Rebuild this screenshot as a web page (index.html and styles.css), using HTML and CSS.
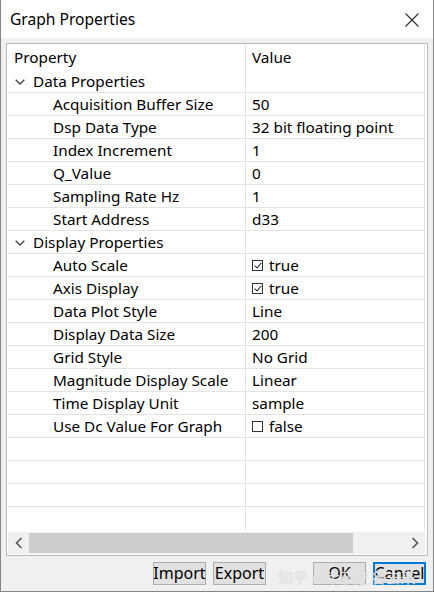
FILE: index.html
```html
<!DOCTYPE html>
<html lang="en">
<head>
    <meta charset="UTF-8">
    <meta name="viewport" content="width=device-width, initial-scale=1.0">
    <title>Graph Properties</title>
    <link rel="stylesheet" href="styles.css">
</head>
<body>
<div class="window">
    <div class="titlebar">
        <span class="title">Graph Properties</span>
        <svg class="close" width="14" height="14" viewBox="0 0 14 14">
            <path d="M0.5 0.5 L13.5 13.5 M13.5 0.5 L0.5 13.5" stroke="#333" stroke-width="1.2" fill="none"/>
        </svg>
    </div>

    <div class="body">
        <div class="grid">
            <div class="rows">
                <div class="row head"><div class="name">Property</div><div class="value">Value</div></div>

                <div class="row cat">
                    <div class="name"><svg class="chev" width="10" height="6" viewBox="0 0 10 6"><path d="M0.7 0.7 L5 5 L9.3 0.7" stroke="#444" stroke-width="1.4" fill="none"/></svg>Data Properties</div>
                    <div class="value"></div>
                </div>
                <div class="row"><div class="name item">Acquisition Buffer Size</div><div class="value">50</div></div>
                <div class="row"><div class="name item">Dsp Data Type</div><div class="value">32 bit floating point</div></div>
                <div class="row"><div class="name item">Index Increment</div><div class="value">1</div></div>
                <div class="row"><div class="name item">Q_Value</div><div class="value">0</div></div>
                <div class="row"><div class="name item">Sampling Rate Hz</div><div class="value">1</div></div>
                <div class="row"><div class="name item">Start Address</div><div class="value">d33</div></div>

                <div class="row cat">
                    <div class="name"><svg class="chev" width="10" height="6" viewBox="0 0 10 6"><path d="M0.7 0.7 L5 5 L9.3 0.7" stroke="#444" stroke-width="1.4" fill="none"/></svg>Display Properties</div>
                    <div class="value"></div>
                </div>
                <div class="row"><div class="name item">Auto Scale</div><div class="value"><span class="check on"></span>true</div></div>
                <div class="row"><div class="name item">Axis Display</div><div class="value"><span class="check on"></span>true</div></div>
                <div class="row"><div class="name item">Data Plot Style</div><div class="value">Line</div></div>
                <div class="row"><div class="name item">Display Data Size</div><div class="value">200</div></div>
                <div class="row"><div class="name item">Grid Style</div><div class="value">No Grid</div></div>
                <div class="row"><div class="name item">Magnitude Display Scale</div><div class="value">Linear</div></div>
                <div class="row"><div class="name item">Time Display Unit</div><div class="value">sample</div></div>
                <div class="row"><div class="name item">Use Dc Value For Graph</div><div class="value"><span class="check"></span>false</div></div>

                <div class="row empty"><div class="name"></div><div class="value"></div></div>
                <div class="row empty"><div class="name"></div><div class="value"></div></div>
                <div class="row empty"><div class="name"></div><div class="value"></div></div>
                <div class="row empty"><div class="name"></div><div class="value"></div></div>
            </div>

            <div class="hscroll">
                <svg class="arrow" width="8" height="12" viewBox="0 0 8 12"><path d="M6.5 1 L1.5 6 L6.5 11" stroke="#555" stroke-width="1.6" fill="none"/></svg>
                <div class="track"><div class="thumb"></div></div>
                <svg class="arrow" width="8" height="12" viewBox="0 0 8 12"><path d="M1.5 1 L6.5 6 L1.5 11" stroke="#555" stroke-width="1.6" fill="none"/></svg>
            </div>
        </div>

        <div class="buttons">
            <span class="watermark">知乎 @半夜之名去来了</span>
            <button class="btn">Import</button>
            <button class="btn gap">Export</button>
            <button class="btn">OK</button>
            <button class="btn default">Cancel</button>
        </div>
    </div>
</div>
</body>
</html>
```

FILE: styles.css
```css
* { box-sizing: border-box; }

body {
    margin: 0;
    font-family: "Noto Sans", "Noto Sans CJK SC", sans-serif;
    font-size: 15.3px;
    color: #000;
}

.window {
    width: 434px;
    height: 592px;
    border: 1px solid #858585;
    border-top: none;
    background: #f0f0f0;
    display: flex;
    flex-direction: column;
}

.titlebar {
    height: 38px;
    background: #fff;
    display: flex;
    align-items: center;
    justify-content: space-between;
    padding: 0 14px 0 9px;
}
.title { font-size: 15.6px; }
.close { margin-top: 1px; }

.body {
    flex: 1;
    padding: 5px 5px 0 5px;
    display: flex;
    flex-direction: column;
}

.grid {
    height: 513px;
    border: 1px solid #b9b9b9;
    background: #fff;
    padding: 0 2px 1px 1px;
    display: flex;
    flex-direction: column;
}

.rows {
    flex: 1;
    border-right: 1px solid #e3e3e3;
    overflow: hidden;
}

.row {
    display: flex;
    height: 23px;
    border-bottom: 1px solid #e3e3e3;
    line-height: 22px;
    white-space: nowrap;
}
.row.head { height: 26px; border-bottom: none; line-height: 28px; }
.row.empty:last-child { border-bottom: none; }

.name {
    width: 238px;
    padding-left: 6px;
    border-right: 1px solid #e3e3e3;
    display: flex;
    align-items: center;
}
.name.item { padding-left: 45px; }
.cat .name { padding-left: 7px; }
.chev { margin-right: 8px; margin-top: 1px; }

.value {
    flex: 1;
    padding-left: 6px;
    display: flex;
    align-items: center;
}

.check {
    width: 11px;
    height: 11px;
    border: 1px solid #333;
    margin-right: 6px;
    margin-top: 1px;
    position: relative;
}
.check.on::after {
    content: "";
    position: absolute;
    left: 3px;
    top: 0px;
    width: 3px;
    height: 6px;
    border: solid #222;
    border-width: 0 1.5px 1.5px 0;
    transform: rotate(40deg);
}

.hscroll {
    height: 22px;
    margin-top: 2px;
    background: #f0f0f0;
    display: flex;
    align-items: center;
    padding: 0 6px 0 7px;
    gap: 6px;
}
.track { flex: 1; height: 20px; display: flex; }
.thumb { width: 324px; background: #cdcdcd; }

.buttons {
    flex: 1;
    display: flex;
    justify-content: flex-end;
    align-items: center;
    gap: 7px;
    padding: 2px 2px 2px 0;
    position: relative;
}

.btn {
    font-family: inherit;
    font-size: 16px;
    height: 23px;
    width: 53px;
    padding: 0 0 1px 0;
    line-height: 1;
    display: flex;
    align-items: center;
    justify-content: center;
    background: #e1e1e1;
    border: 1px solid #adadad;
    color: #000;
    position: relative;
}
.btn.gap { margin-right: 40px; }
.btn.default { border: 2px solid #0078d7; }

.watermark {
    position: absolute;
    left: 272px;
    top: 10px;
    font-size: 15px;
    color: rgba(255, 255, 255, 0.6);
    text-shadow: 0 0 1px #c0c0c0;
    pointer-events: none;
    z-index: 1;
}
```
